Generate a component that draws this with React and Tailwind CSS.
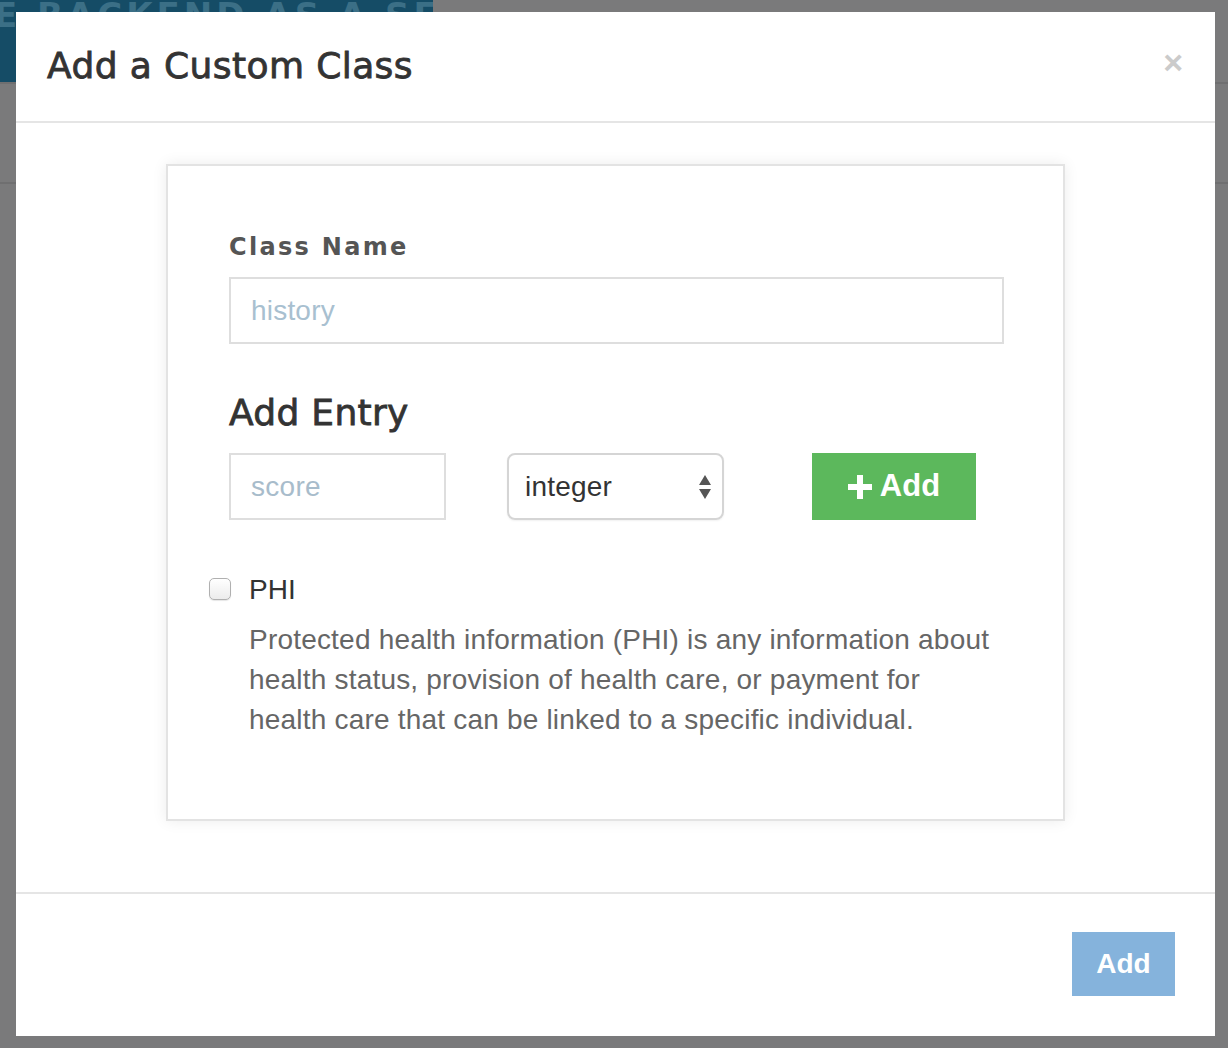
export default function App() {
  return (
    <div className="relative h-[1048px] w-[1228px] overflow-hidden bg-[#7a7a7b] font-['Liberation_Sans',Arial,sans-serif]">
      {/* page behind the overlay */}
      <div className="flex h-[82px] w-full">
        <div className="flex h-full w-[433px] items-start overflow-hidden bg-[#154c66]">
          <span className="-mt-[10px] -ml-[6px] whitespace-nowrap text-[34px] font-bold tracking-[4px] text-[#3b6f86] font-['DejaVu_Sans',sans-serif]">E BACKEND AS A SERVICE</span>
        </div>
      </div>
      <div className="h-[100px] border-t-2 border-[#6f6f70]" />
      <div className="border-t-2 border-[#6f6f70]" />

      {/* modal */}
      <div className="absolute left-[16px] top-[12px] flex h-[1024px] w-[1199px] flex-col bg-white">
        <div className="flex h-[111px] shrink-0 items-center justify-between border-b-2 border-[#e5e5e5] pl-[31px] pr-[32px]">
          <h2 className="-mt-[2px] text-[36px] font-normal tracking-[0.4px] text-[#333] [-webkit-text-stroke:0.8px_#333] font-['DejaVu_Sans',sans-serif]">Add a Custom Class</h2>
          <span className="-mt-[9px] text-[34px] font-bold leading-none text-[#cbcbcb]">×</span>
        </div>

        <div className="flex flex-1 justify-center pt-[41px]">
          <div className="h-[657px] w-[899px] border-2 border-[#e3e3e3] bg-white pl-[61px] pr-[60px] pt-[69px] shadow-[0_0_14px_rgba(0,0,0,0.08)]">
            <label className="block text-[24px] font-bold leading-none tracking-[2.3px] text-[#555] font-['DejaVu_Sans',sans-serif]">Class Name</label>
            <input
              readOnly
              placeholder="history"
              className="mt-[18px] h-[67px] w-[775px] border-2 border-[#dedede] px-[20px] text-[28px] tracking-[0.2px] outline-none placeholder:text-[#a8c0d0]"
            />
            <h3 className="mt-[51px] text-[36px] font-normal leading-none tracking-[0.3px] text-[#333] [-webkit-text-stroke:0.8px_#333] font-['DejaVu_Sans',sans-serif]">Add Entry</h3>
            <div className="mt-[22px] flex items-center">
              <input
                readOnly
                placeholder="score"
                className="h-[67px] w-[217px] border-2 border-[#dedede] px-[20px] text-[28px] tracking-[0.3px] outline-none placeholder:text-[#a8bccb]"
              />
              <div className="ml-[61px] flex h-[67px] w-[217px] items-center justify-between rounded-[8px] border-2 border-[#d5d5d5] pl-[16px] pr-[10px] shadow-[0_1px_2px_rgba(0,0,0,0.06)]">
                <span className="text-[28px] tracking-[0.2px] text-[#333]">integer</span>
                <svg width="14" height="26" viewBox="0 0 14 26">
                  <path d="M7 1 L13 11 L1 11 Z" fill="#555" />
                  <path d="M7 25 L13 15 L1 15 Z" fill="#555" />
                </svg>
              </div>
              <button className="ml-[88px] flex h-[67px] w-[164px] items-center justify-center gap-[8px] bg-[#5cb85c] text-[31px] font-bold text-white">
                <svg width="24" height="24" viewBox="0 0 24 24">
                  <path d="M9 0 H15 V9 H24 V15 H15 V24 H9 V15 H0 V9 H9 Z" fill="#fff" />
                </svg>
                <span>Add</span>
              </button>
            </div>

            <div className="-ml-[20px] mt-[55px] flex items-start">
              <div className="mt-[3px] h-[22px] w-[22px] shrink-0 rounded-[5px] border border-[#b0b0b0] bg-gradient-to-b from-white to-[#ececec] shadow-[0_1px_1px_rgba(0,0,0,0.1)]" />
              <div className="ml-[18px]">
                <div className="text-[28px] leading-[30px] text-[#333]">PHI</div>
                <p className="mt-[15px] text-[28px] leading-[40px] tracking-[0.2px] text-[#666]">
                  Protected health information (PHI) is any information about
                  <br />
                  health status, provision of health care, or payment for
                  <br />
                  health care that can be linked to a specific individual.
                </p>
              </div>
            </div>
          </div>
        </div>

        <div className="flex h-[144px] shrink-0 items-start justify-end border-t-2 border-[#e5e5e5] pr-[40px] pt-[38px]">
          <button className="flex h-[64px] w-[103px] items-center justify-center bg-[#85b3dc] text-[28px] font-bold text-white">Add</button>
        </div>
      </div>
    </div>
  );
}
